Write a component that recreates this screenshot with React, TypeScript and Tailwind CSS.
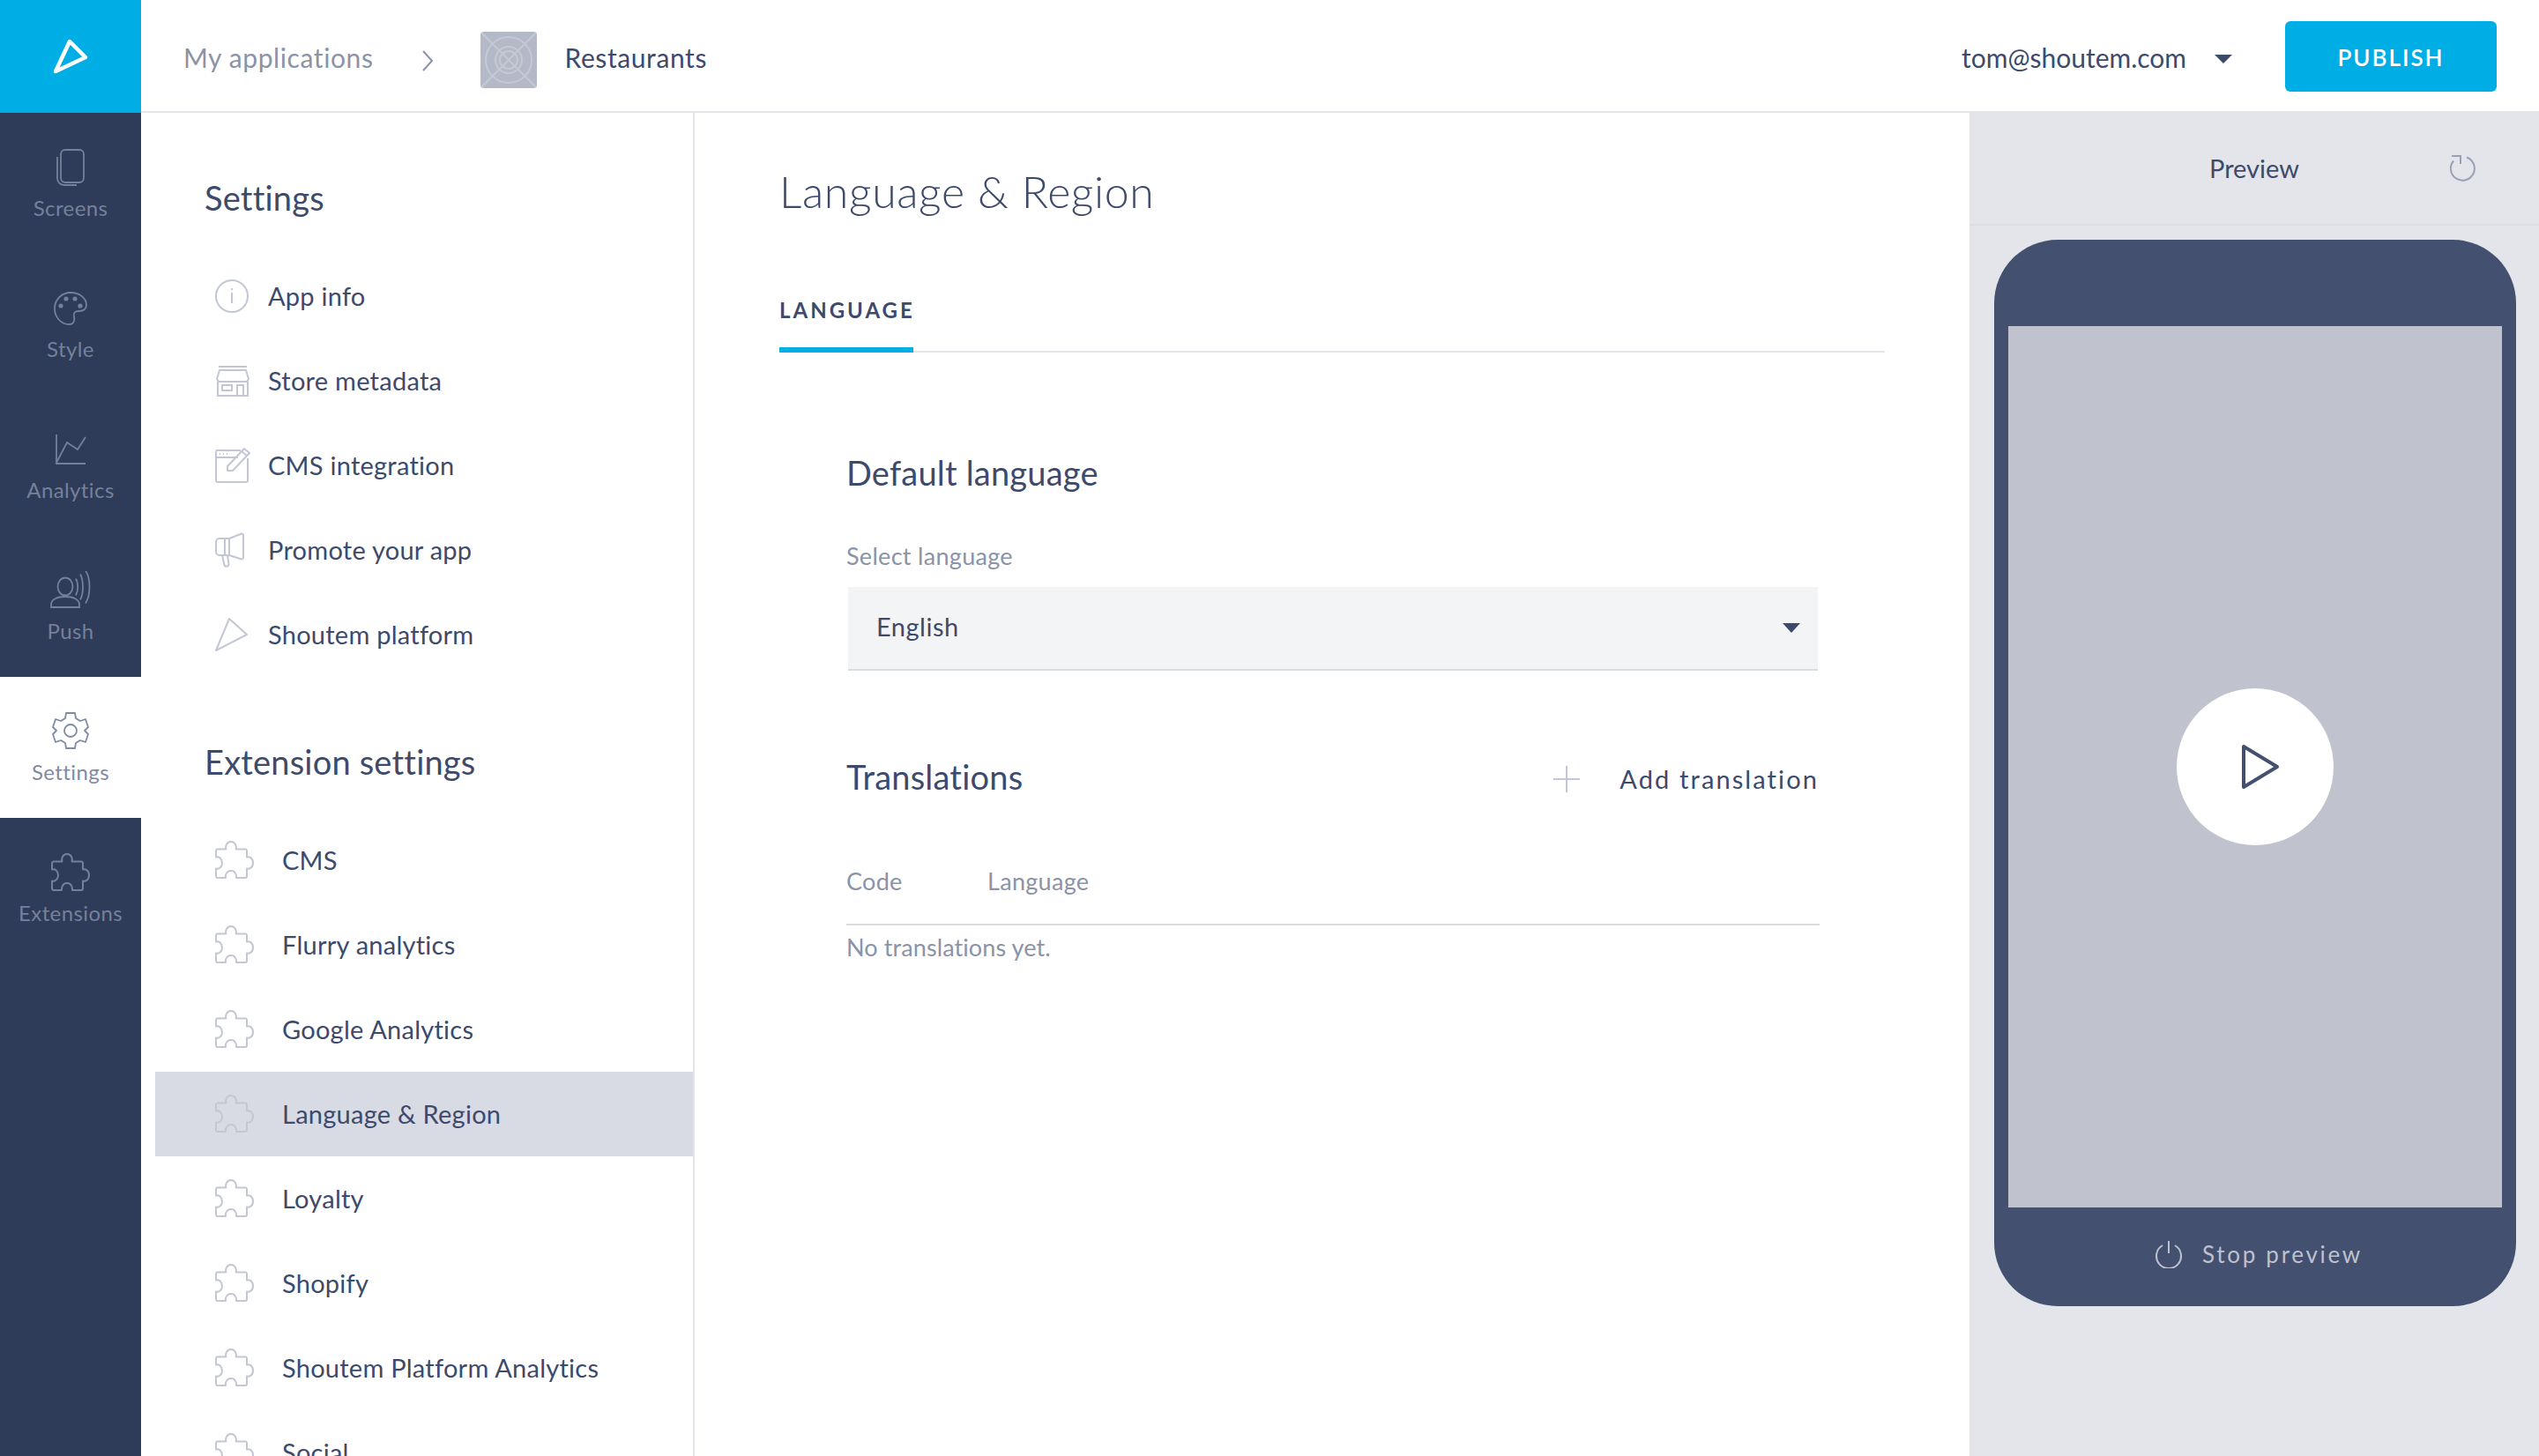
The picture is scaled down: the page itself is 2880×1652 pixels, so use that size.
import type { ReactNode } from 'react'

const railItems = [
  { label: 'Screens', icon: <ScreensIcon /> },
  { label: 'Style', icon: <PaletteIcon /> },
  { label: 'Analytics', icon: <AnalyticsIcon /> },
  { label: 'Push', icon: <PushIcon /> },
  { label: 'Settings', icon: <GearIcon />, active: true },
  { label: 'Extensions', icon: <PuzzleIcon /> },
]

const settingsItems = [
  { label: 'App info', icon: <InfoIcon /> },
  { label: 'Store metadata', icon: <StoreIcon /> },
  { label: 'CMS integration', icon: <CmsIcon /> },
  { label: 'Promote your app', icon: <PromoteIcon /> },
  { label: 'Shoutem platform', icon: <PlatformIcon /> },
]

const extensionItems = [
  'CMS',
  'Flurry analytics',
  'Google Analytics',
  'Language & Region',
  'Loyalty',
  'Shopify',
  'Shoutem Platform Analytics',
  'Social',
]

function ScreensIcon() {
  return (
    <svg width="32" height="42" viewBox="0 0 32 42" fill="none" stroke="currentColor" strokeWidth="1.8">
      <rect x="5" y="1" width="26" height="37" rx="5" />
      <path d="M1 9v24c0 4.500 3 8 8 8h14" />
    </svg>
  )
}

function PaletteIcon() {
  return (
    <svg width="40" height="40" viewBox="0 0 40 40" fill="none" stroke="currentColor" strokeWidth="1.8">
      <path d="M20 2c11 0 18 7 18 14 0 5-4 7-9 7-4 0-6 2-5 6 1 4 0 9-5 9C9 38 2 30 2 20 2 10 10 2 20 2Z" />
      <circle cx="9" cy="17" r="2.600" fill="currentColor" stroke="none" />
      <circle cx="15" cy="9" r="2.600" fill="currentColor" stroke="none" />
      <circle cx="25" cy="9" r="2.600" fill="currentColor" stroke="none" />
      <circle cx="31" cy="17" r="2.600" fill="currentColor" stroke="none" />
    </svg>
  )
}

function AnalyticsIcon() {
  return (
    <svg width="36" height="36" viewBox="0 0 36 36" fill="none" stroke="currentColor" strokeWidth="1.8">
      <path d="M2 1v33h33" />
      <path d="M2 33 14 10l12 8 9-14" />
    </svg>
  )
}

function PushIcon() {
  return (
    <svg width="46" height="44" viewBox="0 1.500 46 44" fill="none" stroke="currentColor" strokeWidth="1.8">
      <ellipse cx="17" cy="19" rx="8.500" ry="10" />
      <path d="M1 42.500v-3c0-6 7-9 16-9s16 3 16 9v3Z" />
      <path d="M29 10c3 5 3 13 0 19" />
      <path d="M34 5c4 7 4 22 0 29" />
      <path d="M40 1c6 9 6 28 0 37" />
    </svg>
  )
}

function GearIcon() {
  return (
    <svg width="42" height="44" viewBox="0 1 42 44" fill="none" stroke="currentColor" strokeWidth="1.8">
      <path d="M16 2h10l1 6 5 3 6-2 3 9-4 4 4 4-3 9-6-2-5 3-1 6H16l-1-6-5-3-6 2-3-9 4-4-4-4 3-9 6 2 5-3Z" strokeLinejoin="round" />
      <circle cx="21" cy="22" r="7" />
    </svg>
  )
}

function PuzzleIcon() {
  return (
    <svg width="44" height="44" viewBox="0 0 44 44" fill="none" stroke="currentColor" strokeWidth="2">
      <path d="M3 9.500h9.500C11.500 7 12.500 1 18 1s6.500 6 5.500 8.500H34a2 2 0 0 1 2 2v7c2-1 7 .5 7 6.500s-5 7.500-7 6.500V40a2 2 0 0 1-2 2H24c.5-3-1-8-6-8s-6.500 5-6 8H3a2 2 0 0 1-2-2v-8.500c3 1 7-1.500 7-6.500s-4-7.500-7-6.500v-7a2 2 0 0 1 2-2Z" strokeLinejoin="round" />
    </svg>
  )
}

function InfoIcon() {
  return (
    <svg width="40" height="40" viewBox="0 0 40 40" fill="none" stroke="#c3c6d4" strokeWidth="2">
      <circle cx="19" cy="20" r="18" />
      <path d="M19 16v12" />
      <path d="M19 11v2" />
    </svg>
  )
}

function StoreIcon() {
  return (
    <svg width="40" height="36" viewBox="0 0 40 36" fill="none" stroke="#c3c6d4" strokeWidth="2">
      <path d="M4 2h32" />
      <path d="M5 6h30l3 10-2 3H4l-2-3Z" strokeLinejoin="round" />
      <path d="M3 19v16h34V19" />
      <path d="M25 35V23h7v12" />
      <rect x="8" y="23" width="11" height="6" />
    </svg>
  )
}

function CmsIcon() {
  return (
    <svg width="40" height="40" viewBox="0 0 40 40" fill="none" stroke="#c3c6d4" strokeWidth="2">
      <path d="M29 3H3a2 2 0 0 0-2 2v32a2 2 0 0 0 2 2h32a2 2 0 0 0 2-2V12" />
      <path d="M1 11h25" />
      <path d="M5 7h1M9 7h1M13 7h1" />
      <path d="m14 26v-5L33 1l6 5-19 20Z" strokeLinejoin="round" />
      <path d="m30 4 6 5" />
    </svg>
  )
}

function PromoteIcon() {
  return (
    <svg width="34" height="40" viewBox="0 0 34 40" fill="none" stroke="#c3c6d4" strokeWidth="2" strokeLinejoin="round">
      <path d="M16 7H5a4 4 0 0 0-4 4v11a4 4 0 0 0 4 4h11Z" />
      <path d="M16 7 30 1.500a2 2 0 0 1 2 1.500v26a2 2 0 0 1-2 1.500L16 26" />
      <path d="M11 7v19" />
      <path d="m8 26 2.500 11c.5 2.500 5 2 5-1L14 26" />
    </svg>
  )
}

function PlatformIcon() {
  return (
    <svg width="38" height="38" viewBox="0 0 38 38" fill="none" stroke="#c3c6d4" strokeWidth="2" strokeLinejoin="round">
      <path d="M16 1 36 19 1 37Z" />
    </svg>
  )
}

function SideRow({ icon, label, active, wide }: { icon: ReactNode; label: string; active?: boolean; wide?: boolean }) {
  return (
    <div className={`flex h-24 items-center pl-[68px] text-[29px] tracking-[0.25px] text-[#3d4a6b] ${active ? 'bg-[#d8dbe3]' : ''}`}>
      <div className={`flex shrink-0 ${wide ? 'w-[76px]' : 'w-[60px]'}`}>{icon}</div>
      <span>{label}</span>
    </div>
  )
}

export default function App() {
  return (
    <div className="flex h-[1652px] w-[2880px] overflow-hidden bg-white font-['Lato',sans-serif] text-[#3d4a6b]">
      <aside className="flex w-40 shrink-0 flex-col bg-[#2e3b59]">
        <div className="flex h-32 items-center justify-center bg-[#00aee6]">
          <svg className="ml-[2px] mt-[2px]" width="42" height="42" viewBox="0 0 42 42" fill="none" stroke="white" strokeWidth="4.500" strokeLinejoin="round">
            <path d="M19 3 37 21 3 37Z" />
          </svg>
        </div>
        {railItems.map((item) => (
          <div
            key={item.label}
            className={`flex h-40 flex-col items-center pt-[39px] text-[24px] tracking-[0.4px] ${
              item.active ? 'bg-white text-[#7f8aa3]' : 'text-[#75819a]'
            }`}
          >
            <div className="flex h-[46px] items-center justify-center">{item.icon}</div>
            <span className="mt-[7px] leading-[32px]">{item.label}</span>
          </div>
        ))}
      </aside>

      <div className="flex min-w-0 flex-1 flex-col">
        <header className="flex h-32 shrink-0 items-center border-b-2 border-[#e3e5ea] pl-[48px] pr-[48px]">
          <span className="mt-[4px] text-[30px] tracking-[0.6px] text-[#8a93a8]">My applications</span>
          <svg className="ml-[55px] mt-[12px]" width="14" height="24" viewBox="0 0 14 24" fill="none" stroke="#8a93a8" strokeWidth="2">
            <path d="m2 1 10 11L2 23" />
          </svg>
          <svg className="ml-[53px] mt-[10px] rounded-[4px]" width="64" height="64" viewBox="0 0 64 64" fill="none" stroke="#c4c9d4" strokeWidth="2">
            <rect width="64" height="64" fill="#b3b9c6" stroke="none" />
            <path d="M0 0l64 64M64 0 0 64" />
            <circle cx="32" cy="32" r="26" />
            <circle cx="32" cy="32" r="15" />
            <circle cx="32" cy="32" r="10" />
          </svg>
          <span className="ml-[31px] mt-[4px] text-[30px] tracking-[0.6px]">Restaurants</span>
          <span className="ml-auto mt-[4px] text-[30px]">tom@shoutem.com</span>
          <div className="ml-[32px] mt-[8px] h-0 w-0 border-x-[10px] border-t-[10px] border-x-transparent border-t-[#3d4a6b]" />
          <button className="ml-[60px] mt-[2px] h-20 w-60 rounded-[6px] bg-[#00aee6] pt-[2px] text-[26px] font-semibold tracking-[2px] text-white">
            PUBLISH
          </button>
        </header>

        <div className="flex min-h-0 flex-1">
          <nav className="w-[628px] shrink-0 border-r-2 border-[#e3e5ea] pl-4">
            <h2 className="mb-[42px] mt-[74px] h-[44px] pl-[56px] text-[38px] leading-[44px] tracking-[0.2px]">Settings</h2>
            {settingsItems.map((item) => (
              <SideRow key={item.label} icon={item.icon} label={item.label} />
            ))}
            <h2 className="mb-[42px] mt-[74px] h-[44px] pl-[56px] text-[38px] leading-[44px] tracking-[0.2px]">Extension settings</h2>
            {extensionItems.map((label) => (
              <SideRow
                key={label}
                wide
                label={label}
                active={label === 'Language & Region'}
                icon={<span className="text-[#c3c6d4]"><PuzzleIcon /></span>}
              />
            ))}
          </nav>

          <main className="min-w-0 flex-1 px-24">
            <h1 className="mt-[59px] h-[60px] text-[50px] font-light leading-[60px] tracking-[0.65px]">Language &amp; Region</h1>
            <div className="mt-[85px] flex border-b-2 border-[#e3e5ea]">
              <div className="-mb-[2px] w-[152px] border-b-[6px] border-[#00aee6] pb-[22px] text-[24px] font-bold leading-[40px] tracking-[3px]">
                LANGUAGE
              </div>
            </div>

            <div className="w-[1180px] pl-[76px]">
              <h3 className="mt-[114px] h-[44px] text-[38px] leading-[44px] tracking-[0.2px]">Default language</h3>
              <div className="mt-[57px] h-8 text-[27px] leading-[32px] tracking-[0.3px] text-[#8a93a8]">Select language</div>
              <div className="ml-[2px] mt-[19px] flex h-[95px] w-[1100px] items-center justify-between border-b-2 border-[#d9dbe0] bg-[#f3f4f6] pl-[32px] pr-[20px] text-[29px] tracking-[0.5px]">
                <span className="mb-[3px]">English</span>
                <div className="h-0 w-0 border-x-[10px] border-t-[11px] border-x-transparent border-t-[#3d4a6b]" />
              </div>

              <div className="mt-[98px] flex h-[44px] items-center justify-between pr-[1px]">
                <h3 className="text-[38px] leading-[44px] tracking-[0.2px]">Translations</h3>
                <div className="mt-[6px] flex items-center gap-[45px]">
                  <svg width="30" height="30" viewBox="0 0 30 30" stroke="#c3c6d4" strokeWidth="2">
                    <path d="M15 0v30M0 15h30" />
                  </svg>
                  <span className="text-[29px] tracking-[2.100px]">Add translation</span>
                </div>
              </div>

              <div className="mt-[81px] flex h-[66px] border-b-2 border-[#dcdcdc] text-[27px] leading-[32px] tracking-[0.3px] text-[#8a93a8]">
                <span className="w-40">Code</span>
                <span>Language</span>
              </div>
              <p className="mt-[9px] text-[27px] leading-[32px] tracking-[0.1px] text-[#8a93a8]">No translations yet.</p>
            </div>
          </main>

          <section className="w-[646px] shrink-0 bg-[#e3e5ea]">
            <div className="grid h-32 grid-cols-[1fr_auto_1fr] items-center border-b-2 border-[#dcdee3]">
              <span />
              <span className="text-[29px]">Preview</span>
              <div className="flex justify-end pr-[71px]">
                <svg width="30" height="30" viewBox="0 0 30 30" fill="none" stroke="#9aa1b3" strokeWidth="2">
                  <path d="M19 2.500a13.500 13.500 0 1 1-15 4" />
                  <path d="M2 1h10v9" />
                </svg>
              </div>
            </div>

            <div className="ml-[28px] mt-4 flex h-[1210px] w-[592px] flex-col rounded-[72px] bg-[#43506f] px-4 pt-[98px]">
              <div className="flex h-[1000px] items-center justify-center bg-[#c0c2ce]">
                <div className="flex h-[178px] w-[178px] items-center justify-center rounded-full bg-white">
                  <svg className="ml-[11px]" width="44" height="52" viewBox="0 0 44 52" fill="none" stroke="#43506f" strokeWidth="4" strokeLinejoin="round">
                    <path d="M3 3 41 26 3 49Z" />
                  </svg>
                </div>
              </div>
              <div className="flex flex-1 items-center justify-center gap-[22px] pb-[6px] pl-[8px] text-[#bfc2ce]">
                <svg width="32" height="32" viewBox="0 0 32 32" fill="none" stroke="currentColor" strokeWidth="2">
                  <path d="M9 6a14 14 0 1 0 14 0" />
                  <path d="M16 1v14" />
                </svg>
                <span className="text-[26px] tracking-[2.700px]">Stop preview</span>
              </div>
            </div>
          </section>
        </div>
      </div>
    </div>
  )
}
